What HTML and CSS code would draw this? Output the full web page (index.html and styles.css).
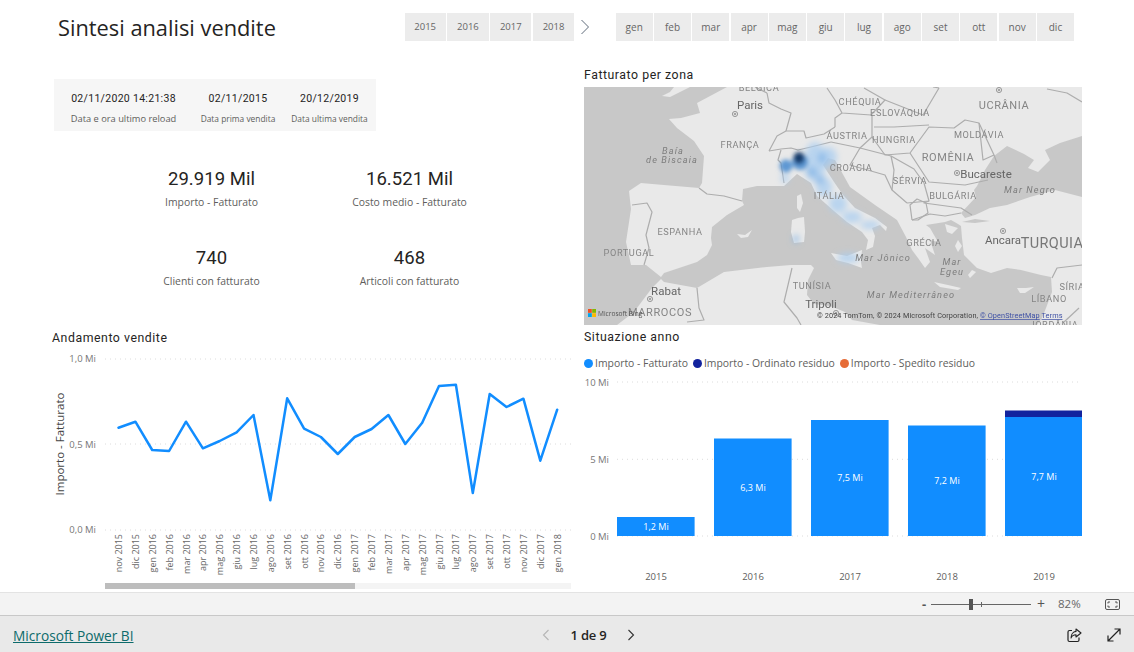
FILE: index.html
```html
<!DOCTYPE html>
<html lang="it">
<head>
<meta charset="utf-8">
<title>Sintesi analisi vendite</title>
<link rel="stylesheet" href="styles.css">
</head>
<body>
<div class="app">
  <main class="canvas">
    <header class="topbar">
      <h1 class="page-title">Sintesi analisi vendite</h1>
      <div class="slicer slicer-years">
        <div class="chip year">2015</div><div class="chip year">2016</div><div class="chip year">2017</div><div class="chip year">2018</div>
      </div>
      <svg class="slicer-next" width="10" height="16" viewBox="0 0 10 16"><path d="M1.5 1 L8.5 8 L1.5 15" fill="none" stroke="#5f6b7a" stroke-width="1"/></svg>
      <div class="slicer slicer-months">
        <div class="chip">gen</div><div class="chip">feb</div><div class="chip">mar</div><div class="chip">apr</div><div class="chip">mag</div><div class="chip">giu</div><div class="chip">lug</div><div class="chip">ago</div><div class="chip">set</div><div class="chip">ott</div><div class="chip">nov</div><div class="chip">dic</div>
      </div>
    </header>

    <div class="columns">
      <section class="col-left">
        <div class="info-box">
          <div class="info"><div class="info-value">02/11/2020 14:21:38</div><div class="info-label info-label-wide">Data e ora ultimo reload</div></div>
          <div class="info"><div class="info-value">02/11/2015</div><div class="info-label">Data prima vendita</div></div>
          <div class="info"><div class="info-value">20/12/2019</div><div class="info-label">Data ultima vendita</div></div>
        </div>

        <div class="kpis">
          <div class="kpi"><div class="kpi-value">29.919 Mil</div><div class="kpi-label">Importo - Fatturato</div></div>
          <div class="kpi"><div class="kpi-value">16.521 Mil</div><div class="kpi-label">Costo medio - Fatturato</div></div>
          <div class="kpi"><div class="kpi-value">740</div><div class="kpi-label">Clienti con fatturato</div></div>
          <div class="kpi"><div class="kpi-value">468</div><div class="kpi-label">Articoli con fatturato</div></div>
        </div>

        <h2 class="visual-title">Andamento vendite</h2>
        <svg class="line-chart" width="520" height="237" viewBox="52 345 520 237">
          <g class="grid">
            <line x1="105" x2="571" y1="358" y2="358"/><line x1="105" x2="571" y1="443" y2="443"/><line x1="105" x2="571" y1="529" y2="529"/>
          </g>
          <g class="axis-y">
            <text x="96" y="361">1,0 Mi</text><text x="96" y="447">0,5 Mi</text><text x="96" y="532">0,0 Mi</text>
          </g>
          <text class="axis-title" transform="translate(63.5,443) rotate(-90)">Importo - Fatturato</text>
          <polyline class="trend" points="118.5,426.7 135.4,420.7 152.2,449 169.1,450 186,420.7 202.9,447.3 219.7,440 236.6,431.3 253.5,414 270.3,499.3 287.2,397.3 304.1,427.7 320.9,436 337.8,453 354.7,436 371.6,428 388.4,414 405.3,443 422.2,421.7 439,385 455.9,383.7 472.8,492 489.7,393 506.5,406 523.4,397.7 540.3,459.7 557.2,408.7"/>
          <g class="axis-x">
            <text transform="translate(122,533) rotate(-90)">nov 2015</text>
            <text transform="translate(138.9,533) rotate(-90)">dic 2015</text>
            <text transform="translate(155.7,533) rotate(-90)">gen 2016</text>
            <text transform="translate(172.6,533) rotate(-90)">feb 2016</text>
            <text transform="translate(189.5,533) rotate(-90)">mar 2016</text>
            <text transform="translate(206.4,533) rotate(-90)">apr 2016</text>
            <text transform="translate(223.2,533) rotate(-90)">mag 2016</text>
            <text transform="translate(240.1,533) rotate(-90)">giu 2016</text>
            <text transform="translate(257,533) rotate(-90)">lug 2016</text>
            <text transform="translate(273.8,533) rotate(-90)">ago 2016</text>
            <text transform="translate(290.7,533) rotate(-90)">set 2016</text>
            <text transform="translate(307.6,533) rotate(-90)">ott 2016</text>
            <text transform="translate(324.4,533) rotate(-90)">nov 2016</text>
            <text transform="translate(341.3,533) rotate(-90)">dic 2016</text>
            <text transform="translate(358.2,533) rotate(-90)">gen 2017</text>
            <text transform="translate(375.1,533) rotate(-90)">feb 2017</text>
            <text transform="translate(391.9,533) rotate(-90)">mar 2017</text>
            <text transform="translate(408.8,533) rotate(-90)">apr 2017</text>
            <text transform="translate(425.7,533) rotate(-90)">mag 2017</text>
            <text transform="translate(442.5,533) rotate(-90)">giu 2017</text>
            <text transform="translate(459.4,533) rotate(-90)">lug 2017</text>
            <text transform="translate(476.3,533) rotate(-90)">ago 2017</text>
            <text transform="translate(493.2,533) rotate(-90)">set 2017</text>
            <text transform="translate(510,533) rotate(-90)">ott 2017</text>
            <text transform="translate(526.9,533) rotate(-90)">nov 2017</text>
            <text transform="translate(543.8,533) rotate(-90)">dic 2017</text>
            <text transform="translate(560.7,533) rotate(-90)">gen 2018</text>
          </g>
        </svg>
        <div class="scroll-track"><div class="scroll-thumb"></div></div>
      </section>

      <section class="col-right">
        <h2 class="visual-title title-map">Fatturato per zona</h2>
        <svg class="map" width="498" height="238" viewBox="584 87 498 238">
          <defs>
            <filter id="heat" x="-50%" y="-50%" width="200%" height="200%"><feGaussianBlur stdDeviation="3"/></filter>
            <filter id="heat-core" x="-80%" y="-80%" width="260%" height="260%"><feGaussianBlur stdDeviation="2.2"/></filter>
          </defs>
          <rect class="water" x="584" y="87" width="498" height="238"/>
          <g class="land">
            <polygon points="727,87 697,103 700,113 681,118 669,119 677,128 694,141 704,156 702,183 699,188 664,185 641,183 629,191 631,209 626,242 631,265 646,265 661,277 664,273 697,262 707,255 712,245 711,238 712,227 727,215 744,205 742,201 743,189 757,186 784,186 797,174 811,183 817,196 834,211 847,222 862,232 868,240 866,250 873,247 875,236 872,228 880,225 886,231 887,227 875,218 855,208 843,195 834,182 823,165 828,158 835,160 850,187 875,205 897,220 906,237 912,250 918,258 925,268 930,262 925,248 935,255 930,240 938,242 930,228 926,225 945,222 951,220 958,224 961,226 962,238 964,255 977,268 991,273 1007,268 1021,270 1041,275 1051,277 1052,292 1046,308 1042,318 1037,325 1082,325 1082,197 1055,190 1030,197 1007,205 990,208 975,215 965,218 961,213 976,197 974,190 977,186 985,170 994,156 1007,146 1024,154 1034,160 1028,168 1038,172 1050,160 1045,150 1060,143 1082,136 1082,87"/>
            <polygon points="617,325 634,312 652,288 661,279 664,282 697,288 724,272 767,267 791,265 811,265 814,268 808,280 807,295 814,304 830,306 845,312 852,320 880,325"/>
            <polygon points="662,96 670,92 674,87 690,87 680,92 670,97"/>
            <polygon points="792,220 798,218 804,217 805,232 804,242 794,243 791,232"/>
            <polygon points="797,196 801,194 803,203 800,212 797,208"/>
            <polygon points="737,234 745,235 752,230 748,237 741,238"/>
            <polygon points="831,253 847,256 862,250 861,262 862,268 848,263 836,260"/>
            <polygon points="934,282 948,285 961,288 958,290 940,287"/>
            <polygon points="1017,288 1026,288 1034,287 1025,293 1020,293"/>
            <polygon points="945,224 958,228 952,234 947,232"/>
            <polygon points="958,240 962,246 958,252 955,246"/>
            <polygon points="972,270 976,272 970,278 968,275"/>
          </g>
          <path class="marmara" d="M962 222 L975 219 L990 221 L975 223 Z"/>
          <g class="borders">
            <polyline points="767,93 769,103 781,109 791,113 786,131"/>
            <polyline points="755,87 767,93"/>
            <polyline points="769,151 777,136 786,131 804,131 806,138 824,134 835,127"/>
            <polyline points="769,151 781,149 791,148 798,150 811,147 831,142"/>
            <polyline points="781,150 778,160 781,163 784,183"/>
            <polyline points="699,188 707,194 724,196 742,201"/>
            <polyline points="632,205 647,203 652,212 646,235 649,248 644,265"/>
            <polyline points="827,88 835,100 842,113 871,115 885,100 864,88"/>
            <polyline points="835,127 835,118 842,113"/>
            <polyline points="872,115 872,137 860,148 831,142"/>
            <polyline points="885,100 923,115 939,88"/>
            <polyline points="874,127 894,127 929,125"/>
            <polyline points="872,137 885,155 910,153 929,127 954,128 965,120 979,123 994,155 997,163"/>
            <polyline points="979,123 983,160 994,155"/>
            <polyline points="910,153 923,173 929,182 965,185 988,180"/>
            <polyline points="860,148 891,156 914,169 924,183 929,201 907,203"/>
            <polyline points="891,156 894,170 892,190 907,203"/>
            <polyline points="860,148 850,165 885,175 892,190"/>
            <polyline points="929,201 924,203 961,208 972,215"/>
            <polyline points="912,220 910,205 917,199 926,203 928,213 918,220 912,220"/>
            <polyline points="912,220 930,214 945,216 961,213"/>
            <polyline points="792,268 784,302 797,318 801,325"/>
            <polyline points="697,288 699,308 704,320 687,322"/>
            <polyline points="1052,278 1057,268 1082,265"/>
            <polyline points="1079,308 1064,322"/>
            <polyline points="1047,89 1067,93 1082,102"/>
            <polyline points="933,87 939,88"/>
          </g>
          <g class="heat" filter="url(#heat)">
            <ellipse class="h1" cx="815" cy="162" rx="11" ry="20"/>
            <ellipse class="h1" cx="828" cy="157" rx="9" ry="10"/>
            <ellipse class="h1" cx="785" cy="178" rx="4" ry="5"/>
            <ellipse class="h1" cx="824" cy="187" rx="8" ry="10"/>
            <ellipse class="h1" cx="838" cy="204" rx="9" ry="9"/>
            <ellipse class="h1" cx="852" cy="217" rx="10" ry="6"/>
            <ellipse class="h1" cx="870" cy="225" rx="10" ry="4"/>
            <ellipse class="h2" cx="812" cy="172" rx="5" ry="5"/>
            <ellipse class="h2" cx="822" cy="158" rx="4" ry="5"/>
            <ellipse class="h2" cx="820" cy="180" rx="4" ry="4"/>
            <ellipse class="h1" cx="848" cy="258" rx="11" ry="5"/>
            <ellipse class="h2" cx="796" cy="239" rx="3" ry="4"/>
          </g>
          <g filter="url(#heat-core)">
            <ellipse class="h3" cx="786" cy="166" rx="6.5" ry="6.5"/>
            <ellipse class="h3" cx="800" cy="162" rx="8" ry="8"/>
            <ellipse class="h4" cx="799" cy="158" rx="5.5" ry="6"/>
          </g>
          <g class="places">
            <circle cx="735" cy="114" r="2.6"/><circle cx="735" cy="114" r=".8"/>
            <circle cx="957" cy="173" r="2.6"/><circle cx="957" cy="173" r=".8"/>
            <circle cx="1003" cy="231" r="2.6"/><circle cx="1003" cy="231" r=".8"/>
            <circle cx="650" cy="299" r="2.6"/><circle cx="650" cy="299" r=".8"/>
            <circle cx="836" cy="313" r="2.6"/><circle cx="836" cy="313" r=".8"/>
            <circle cx="999" cy="90" r="2.6"/><circle cx="999" cy="90" r=".8"/>
          </g>
          <g class="ml">
            <text x="759" y="91">BÉLGICA</text>
            <text x="740" y="148">FRANÇA</text>
            <text x="860" y="105">CHÉQUIA</text>
            <text x="900" y="116">ESLOVÁQUIA</text>
            <text x="847" y="139">ÁUSTRIA</text>
            <text x="894" y="143">HUNGRIA</text>
            <text class="big" x="1004" y="109">UCRÂNIA</text>
            <text x="979" y="138">MOLDÁVIA</text>
            <text class="big" x="948" y="161">ROMÊNIA</text>
            <text x="953" y="199">BULGÁRIA</text>
            <text x="910" y="184">SÉRVIA</text>
            <text x="851" y="171">CROÁCIA</text>
            <text x="829" y="199">ITÁLIA</text>
            <text x="680" y="235">ESPANHA</text>
            <text x="629" y="256">PORTUGAL</text>
            <text class="big" x="660" y="316">MARROCOS</text>
            <text x="812" y="289">TUNÍSIA</text>
            <text x="924" y="246">GRÉCIA</text>
            <text x="1049" y="302">LÍBANO</text>
            <text x="1072" y="290">SÍRIA</text>
            <text x="1054" y="328">JORDÂNIA</text>
            <text class="huge" x="1052" y="248">TURQUIA</text>
          </g>
          <g class="city">
            <text x="750" y="109">Paris</text>
            <text x="986" y="178">Bucareste</text>
            <text x="666" y="295">Rabat</text>
            <text x="821" y="308">Tripoli</text>
            <text x="1003" y="244">Ancara</text>
          </g>
          <g class="sea">
            <text x="673" y="154">Baía</text>
            <text x="672" y="163">de Biscaia</text>
            <text x="1030" y="193">Mar Negro</text>
            <text x="883" y="261">Mar Jônico</text>
            <text x="952" y="265">Mar</text>
            <text x="952" y="275">Egeu</text>
            <text x="911" y="298">Mar Mediterrâneo</text>
          </g>
          <g class="ms-logo">
            <rect class="ms1" x="588" y="309" width="3.8" height="3.8"/>
            <rect class="ms2" x="592.2" y="309" width="3.8" height="3.8"/>
            <rect class="ms3" x="588" y="313.2" width="3.8" height="3.8"/>
            <rect class="ms4" x="592.2" y="313.2" width="3.8" height="3.8"/>
          </g>
          <text class="bing" x="598" y="316">Microsoft Bing</text>
          <text class="attrib" x="817" y="318">© 2024 TomTom, © 2024 Microsoft Corporation, <tspan class="attrib-link">© OpenStreetMap</tspan>  <tspan class="attrib-link">Terms</tspan></text>
        </svg>

        <h2 class="visual-title title-bars">Situazione anno</h2>
        <div class="legend">
          <span class="legend-item"><i class="dot dot-a"></i>Importo - Fatturato</span>
          <span class="legend-item"><i class="dot dot-b"></i>Importo - Ordinato residuo</span>
          <span class="legend-item"><i class="dot dot-c"></i>Importo - Spedito residuo</span>
        </div>
        <svg class="bar-chart" width="498" height="220" viewBox="584 372 498 220">
          <g class="grid">
            <line x1="617" x2="1082" y1="382" y2="382"/><line x1="617" x2="1082" y1="459.3" y2="459.3"/><line x1="617" x2="1082" y1="536" y2="536"/>
          </g>
          <g class="axis-y">
            <text x="609" y="385.5">10 Mi</text><text x="609" y="463">5 Mi</text><text x="609" y="540">0 Mi</text>
          </g>
          <g class="bars">
            <rect x="617" y="517" width="77.6" height="19"/>
            <rect x="714" y="438.5" width="77.6" height="97.5"/>
            <rect x="811" y="420" width="77.6" height="116"/>
            <rect x="908" y="425.5" width="77.6" height="110.5"/>
            <rect x="1005" y="417" width="77.6" height="119"/>
          </g>
          <rect class="bar-dark" x="1005" y="410.5" width="77.6" height="6.5"/>
          <g class="bar-values">
            <text x="656" y="529.5">1,2 Mi</text>
            <text x="753" y="491">6,3 Mi</text>
            <text x="850" y="481">7,5 Mi</text>
            <text x="947" y="484">7,2 Mi</text>
            <text x="1044" y="480">7,7 Mi</text>
          </g>
          <g class="bar-x">
            <text x="656" y="580">2015</text>
            <text x="753" y="580">2016</text>
            <text x="850" y="580">2017</text>
            <text x="947" y="580">2018</text>
            <text x="1044" y="580">2019</text>
          </g>
        </svg>
      </section>
    </div>
  </main>

  <div class="zoombar">
    <span class="zoom-minus">-</span>
    <div class="zoom-slider"><span class="zoom-tick"></span><span class="zoom-thumb"></span></div>
    <span class="zoom-plus">+</span>
    <span class="zoom-value">82%</span>
    <svg class="fit-icon" width="15" height="11" viewBox="0 0 15 11"><rect x=".5" y=".5" width="14" height="10" rx="1.5" fill="none" stroke="#555" stroke-width="1"/><path d="M3 4.5 V3 H5 M10 3 H12 V4.5 M12 6.5 V8 H10 M5 8 H3 V6.5" fill="none" stroke="#555" stroke-width="1"/></svg>
  </div>

  <footer class="footer">
    <a class="brand" href="#">Microsoft Power BI</a>
    <nav class="pager">
      <svg class="pager-arrow" width="8" height="12" viewBox="0 0 8 12"><path d="M6.5 1 L1.5 6 L6.5 11" fill="none" stroke="#b5b5b5" stroke-width="1.1"/></svg>
      <span class="pager-text">1 de 9</span>
      <svg class="pager-arrow" width="8" height="12" viewBox="0 0 8 12"><path d="M1.5 1 L6.5 6 L1.5 11" fill="none" stroke="#333" stroke-width="1.1"/></svg>
    </nav>
    <div class="footer-actions">
      <svg width="15" height="15" viewBox="0 0 15 15"><path d="M5 2.5 H2.5 A1.5 1.5 0 0 0 1 4 V12 A1.5 1.5 0 0 0 2.5 13.5 H10.5 A1.5 1.5 0 0 0 12 12 V9.5" fill="none" stroke="#222" stroke-width="1.2"/><path d="M9 1 L14 5 L9 9 V6.8 C6.8 6.8 5 7.6 4 10 C4 6.5 6 3.6 9 3.4 Z" fill="none" stroke="#222" stroke-width="1.1" stroke-linejoin="round"/></svg>
      <svg width="14" height="14" viewBox="0 0 14 14"><path d="M1 13 L13 1 M7.5 1 H13 V6.5 M1 7.5 V13 H6.5" fill="none" stroke="#222" stroke-width="1.2"/></svg>
    </div>
  </footer>
</div>
</body>
</html>
```
FILE: styles.css
```css
* { box-sizing: border-box; }
html, body { margin: 0; padding: 0; height: 100%; overflow: hidden; background: #fff; }
body { font-family: "Open Sans", "Liberation Sans", sans-serif; color: #252423; }
.app { width: 1134px; height: 652px; display: flex; flex-direction: column; }
.canvas { height: 592px; overflow: hidden; flex: none; }

/* header */
.topbar { height: 64px; padding: 13px 0 0 58px; display: flex; align-items: flex-start; }
.page-title { margin: 0; width: 346.5px; font-size: 21.8px; line-height: 30px; font-weight: 400; color: #252423; font-family: "Open Sans", sans-serif; letter-spacing: 0; }
.slicer { display: flex; }
.slicer-years { gap: 1.5px; }
.slicer-months { gap: 1.3px; margin-left: 25.5px; }
.slicer-next { margin: 6px 0 0 6px; flex: none; }
.chip { width: 37px; height: 28px; background: #ececec; color: #666; font-size: 10px; line-height: 28px; text-align: center; }
.chip.year { width: 41.3px; font-size: 9.5px; }

.columns { display: flex; padding-left: 52px; }
.col-left { width: 532px; flex: none; padding-top: 15px; }
.col-right { width: 498px; flex: none; }

/* info */
.info-box { margin-left: 2px; width: 322px; height: 52px; background: #f6f6f6; display: grid; grid-template-columns: 139px 90px 93px; text-align: center; }
.info-value { font-family: Roboto, sans-serif; font-size: 10.5px; line-height: 14px; letter-spacing: .3px; margin-top: 13px; color: #252423; }
.info-label { font-size: 8.4px; line-height: 12px; margin-top: 7px; color: #605e5c; }
.info-label-wide { font-size: 9.3px; }

/* kpis */
.kpis { margin: 34.5px 0 0 60.5px; display: grid; grid-template-columns: 198px 198px; grid-auto-rows: 79px; text-align: center; }
.kpi-value { font-family: Roboto, sans-serif; font-size: 18.5px; line-height: 26px; letter-spacing: .05px; color: #252423; }
.kpi-label { font-size: 10.4px; line-height: 14px; margin-top: 3px; color: #605e5c; }

.visual-title { margin: 0; font-family: Roboto, sans-serif; font-weight: 400; font-size: 12.3px; letter-spacing: .55px; line-height: 16px; color: #252423; }
.col-left .visual-title { margin-top: 6.5px; }
.title-map { padding-top: 1px; height: 23px; line-height: 20px; }
.title-bars { height: 20px; margin-top: 2px; line-height: 20px; }

.line-chart, .bar-chart, .map { display: block; overflow: hidden; }
.grid line { stroke: #dcdcdc; stroke-width: 1; stroke-dasharray: 1 4; }
.axis-y text { font-size: 9.5px; fill: #777; text-anchor: end; }
.axis-title { font-size: 11.5px; fill: #444; text-anchor: middle; }
.trend { fill: none; stroke: #118dff; stroke-width: 2.5; stroke-linejoin: round; stroke-linecap: round; }
.axis-x text { font-size: 9px; fill: #666; text-anchor: end; }
.scroll-track { margin-left: 53px; width: 466px; height: 6px; background: #f4f4f4; }
.scroll-thumb { width: 250px; height: 6px; background: #bdbdbd; }

/* map */
.map { filter: blur(.35px); }
.water { fill: #c8c8c8; }
.land polygon { fill: #e9e9e9; }
.marmara { fill: #c8c8c8; }
.borders polyline { fill: none; stroke: #adadad; stroke-width: 1.2; stroke-linejoin: round; }
.h1 { fill: #a9cdf0; opacity: .75; }
.h2 { fill: #7fb2e5; opacity: .75; }
.h3 { fill: #4f8fd0; opacity: .9; }
.h4 { fill: #153a6b; }
.places circle { fill: none; stroke: #777; stroke-width: .7; }
.ml text { font-family: Roboto, sans-serif; font-size: 9.2px; fill: #858585; text-anchor: middle; letter-spacing: .6px; }
.ml .big { font-size: 11px; }
.ml .huge { font-size: 14.5px; fill: #777; letter-spacing: .4px; }
.city text { font-family: Roboto, sans-serif; font-size: 11.5px; fill: #666; text-anchor: middle; }
.sea text { font-family: Roboto, sans-serif; font-style: italic; font-size: 9.2px; fill: #7d7d7d; text-anchor: middle; letter-spacing: 1.1px; }
.ms1 { fill: #f25022; } .ms2 { fill: #7fba00; } .ms3 { fill: #00a4ef; } .ms4 { fill: #ffb900; }
.bing { font-family: "Open Sans", sans-serif; font-size: 6.6px; fill: #555; }
.attrib { font-family: Roboto, sans-serif; font-size: 7.3px; letter-spacing: .1px; fill: #444; }
.attrib-link { fill: #3f51a5; text-decoration: underline; }

/* bars */
.legend { display: flex; height: 16px; margin-top: 8px; margin-bottom: 1px; font-size: 10.4px; line-height: 16px; color: #605e5c; gap: 5px; }
.legend-item { display: inline-flex; align-items: center; white-space: nowrap; }
.dot { width: 9px; height: 9px; border-radius: 50%; margin-right: 2px; flex: none; }
.dot-a { background: #118dff; } .dot-b { background: #12239e; } .dot-c { background: #e66c37; }
.bars rect { fill: #118dff; }
.bar-dark { fill: #12239e; }
.bar-values text { font-size: 9px; fill: #fff; text-anchor: middle; }
.bar-x text { font-size: 9.5px; fill: #605e5c; text-anchor: middle; }

/* zoom bar */
.zoombar { height: 24px; flex: none; background: #f3f3f3; border-top: 1px solid #e3e3e3; border-bottom: 1px solid #c8c8c8; display: flex; align-items: center; padding-left: 922px; color: #555; }
.zoom-minus { width: 9px; font-size: 13px; font-weight: 700; line-height: 20px; text-align: left; }
.zoom-slider { position: relative; width: 100px; height: 1px; background: #666; }
.zoom-tick { position: absolute; left: 50px; top: -2px; width: 1px; height: 5px; background: #666; }
.zoom-thumb { position: absolute; left: 38px; top: -5px; width: 4px; height: 11px; background: #555; }
.zoom-plus { margin-left: 6px; width: 12px; font-size: 14px; line-height: 20px; }
.zoom-value { margin-left: 9px; width: 33px; font-size: 11.5px; line-height: 20px; color: #666; }
.fit-icon { margin-left: 14px; }

/* footer */
.footer { flex: 1; background: #e9e9e9; display: grid; grid-template-columns: 1fr auto 1fr; align-items: center; padding: 2px 13px 0; }
.brand { font-size: 13.7px; color: #0d6b6b; text-decoration: underline; justify-self: start; }
.pager { display: flex; align-items: center; gap: 20px; margin-left: 43px; }
.pager-text { font-size: 13px; font-weight: 600; color: #252423; letter-spacing: -.2px; }
.footer-actions { display: flex; gap: 25px; justify-self: end; align-items: center; }
```
